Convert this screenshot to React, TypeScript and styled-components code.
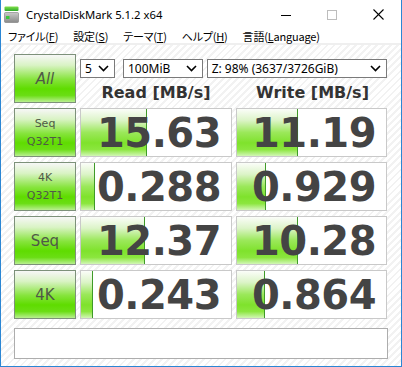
import * as React from 'react';
import styled, { createGlobalStyle } from 'styled-components';

const GlobalStyle = createGlobalStyle`
  html, body {
    margin: 0;
    padding: 0;
    background: #ffffff;
  }
  #root {
    width: 402px;
    height: 367px;
  }
`;

const Window = styled.div`
  width: 402px;
  height: 367px;
  box-sizing: border-box;
  border: 1px solid #2b86d4;
  border-top: none;
  display: flex;
  flex-direction: column;
  background: #ffffff;
  overflow: hidden;
`;

const TitleBar = styled.div`
  height: 29px;
  display: flex;
  align-items: center;
  padding-left: 3px;
  font-family: 'Noto Sans', 'Liberation Sans', sans-serif;
  font-size: 11.3px;
  color: #000;
`;

const TitleText = styled.span`
  margin-left: 7px;
  flex: 1;
`;

const Caption = styled.div`
  width: 46px;
  height: 29px;
  display: flex;
  align-items: center;
  justify-content: center;
`;

const MenuBar = styled.div`
  height: 14px;
  display: flex;
  align-items: center;
  border-bottom: 2px solid #efefef;
  font-family: 'Noto Sans CJK JP', 'Noto Sans', sans-serif;
  font-feature-settings: 'palt';
  font-size: 11px;
  letter-spacing: -0.2px;
  color: #000;
`;

const MenuItem = styled.span`
  padding: 0 8px 0 7px;
  white-space: nowrap;
  u {
    text-decoration: underline;
    text-underline-offset: 1px;
  }
`;

const Content = styled.div`
  flex: 1;
  padding: 9px 13px 0 13px;
  background: repeating-linear-gradient(
    -45deg,
    #ffffff 0px,
    #ffffff 3px,
    #f2f2f2 3px,
    #f2f2f2 5px
  );
`;

const Grid = styled.div`
  display: grid;
  grid-template-columns: 62px 152px 151px;
  grid-template-rows: repeat(5, 49px);
  column-gap: 4px;
  row-gap: 5px;
`;

const LabelButton = styled.div<{ $big?: boolean; $italic?: boolean }>`
  box-sizing: border-box;
  border: 1px solid #7d917a;
  background: linear-gradient(
    to bottom,
    #f7f7f7 0%,
    #d9f3c4 22%,
    #86e43c 52%,
    #5fdc00 72%,
    #6ade14 86%,
    #b9ef90 100%
  );
  display: flex;
  flex-direction: column;
  align-items: center;
  justify-content: center;
  font-family: 'DejaVu Sans', sans-serif;
  font-size: ${(p) => (p.$big ? '15px' : '11px')};
  font-style: ${(p) => (p.$italic ? 'italic' : 'normal')};
  line-height: 18px;
  color: #4f5a47;
`;

const TopCell = styled.div`
  grid-column: 2 / 4;
  display: flex;
  flex-direction: column;
  padding-top: 5px;
`;

const SelectRow = styled.div`
  display: flex;
  height: 19px;
`;

const Select = styled.div<{ $w: number; $gap: number }>`
  width: ${(p) => p.$w}px;
  margin-right: ${(p) => p.$gap}px;
  box-sizing: border-box;
  border: 1px solid #7a7a7a;
  background: #fff;
  display: flex;
  align-items: center;
  justify-content: space-between;
  padding: 0 5px 0 4px;
  font-family: 'Noto Sans', 'Liberation Sans', sans-serif;
  font-size: 12px;
  color: #000;
  white-space: nowrap;
`;

const HeaderRow = styled.div`
  display: grid;
  grid-template-columns: 152px 151px;
  column-gap: 5px;
  margin-top: 5px;
`;

const Header = styled.div`
  text-align: center;
  font-family: 'DejaVu Sans', sans-serif;
  font-weight: bold;
  font-size: 16px;
  color: #333;
  line-height: 20px;
`;

const ValueBox = styled.div`
  position: relative;
  box-sizing: border-box;
  border: 1px solid #c9c9c9;
  background: #fff;
  display: flex;
  align-items: center;
  justify-content: flex-end;
  padding-right: 10px;
  overflow: hidden;
`;

const Bar = styled.div`
  position: absolute;
  left: 0;
  top: 0;
  bottom: 0;
  border-right: 1px solid #3f9a28;
  background: linear-gradient(
    to bottom,
    #fbfdf9 0%,
    #dcf4c8 24%,
    #9be85a 50%,
    #7fe22c 72%,
    #8be63e 86%,
    #d2f6b6 100%
  );
`;

const Value = styled.span`
  position: relative;
  font-family: 'DejaVu Sans', sans-serif;
  font-weight: bold;
  font-size: 40px;
  line-height: 40px;
  color: #444;
  letter-spacing: -0.5px;
`;

const CommentBox = styled.div`
  margin-top: 9px;
  height: 31px;
  box-sizing: border-box;
  border: 1px solid #adadad;
  background: #fff;
`;

const Chevron = () => (
  <svg width="11" height="7" viewBox="0 0 11 7">
    <polyline points="1,1 5.5,5.5 10,1" fill="none" stroke="#000" strokeWidth="1.6" />
  </svg>
);

const AppIcon = () => (
  <svg width="15" height="17" viewBox="0 0 15 17">
    <defs>
      <linearGradient id="drv" x1="0" y1="0" x2="0" y2="1">
        <stop offset="0" stopColor="#c9c9c9" />
        <stop offset="1" stopColor="#8a8a8a" />
      </linearGradient>
      <linearGradient id="grn" x1="0" y1="0" x2="0" y2="1">
        <stop offset="0" stopColor="#7fe04a" />
        <stop offset="1" stopColor="#2ea82a" />
      </linearGradient>
    </defs>
    <rect x="0.5" y="0.5" width="14" height="4.5" rx="1" fill="url(#grn)" />
    <rect x="0.5" y="6.5" width="14" height="10" rx="1" fill="url(#drv)" stroke="#7a7a7a" strokeWidth="0.6" />
    <rect x="2" y="10" width="3.5" height="3" fill="#3cc83c" />
  </svg>
);

const rows = [
  { label: ['Seq', 'Q32T1'], read: '15.63', rw: 65, write: '11.19', ww: 60 },
  { label: ['4K', 'Q32T1'], read: '0.288', rw: 13, write: '0.929', ww: 28 },
  { label: ['Seq'], read: '12.37', rw: 63, write: '10.28', ww: 60 },
  { label: ['4K'], read: '0.243', rw: 11, write: '0.864', ww: 27 },
];

export default function App() {
  return (
    <>
      <GlobalStyle />
      <Window>
        <TitleBar>
          <AppIcon />
          <TitleText>CrystalDiskMark 5.1.2 x64</TitleText>
          <Caption>
            <svg width="10" height="10" viewBox="0 0 10 10">
              <line x1="0" y1="5.5" x2="10" y2="5.5" stroke="#000" strokeWidth="1" />
            </svg>
          </Caption>
          <Caption>
            <svg width="10" height="10" viewBox="0 0 10 10">
              <rect x="0.5" y="0.5" width="9" height="9" fill="none" stroke="#bdbdbd" strokeWidth="1" />
            </svg>
          </Caption>
          <Caption>
            <svg width="11" height="11" viewBox="0 0 11 11">
              <line x1="0.5" y1="0.5" x2="10.5" y2="10.5" stroke="#000" strokeWidth="1.1" />
              <line x1="10.5" y1="0.5" x2="0.5" y2="10.5" stroke="#000" strokeWidth="1.1" />
            </svg>
          </Caption>
        </TitleBar>
        <MenuBar>
          <MenuItem>ファイル(<u>F</u>)</MenuItem>
          <MenuItem>設定(<u>S</u>)</MenuItem>
          <MenuItem>テーマ(<u>T</u>)</MenuItem>
          <MenuItem>ヘルプ(<u>H</u>)</MenuItem>
          <MenuItem>言語(<u>L</u>anguage)</MenuItem>
        </MenuBar>
        <Content>
          <Grid>
            <LabelButton $big $italic>All</LabelButton>
            <TopCell>
              <SelectRow>
                <Select $w={35} $gap={8}>
                  5<Chevron />
                </Select>
                <Select $w={80} $gap={4}>
                  100MiB<Chevron />
                </Select>
                <Select $w={181} $gap={0}>
                  Z: 98% (3637/3726GiB)<Chevron />
                </Select>
              </SelectRow>
              <HeaderRow>
                <Header>Read [MB/s]</Header>
                <Header>Write [MB/s]</Header>
              </HeaderRow>
            </TopCell>
            {rows.map((r) => (
              <React.Fragment key={r.read}>
                <LabelButton $big={r.label.length === 1}>
                  {r.label.map((l) => (
                    <span key={l}>{l}</span>
                  ))}
                </LabelButton>
                <ValueBox>
                  <Bar style={{ width: r.rw }} />
                  <Value>{r.read}</Value>
                </ValueBox>
                <ValueBox>
                  <Bar style={{ width: r.ww }} />
                  <Value>{r.write}</Value>
                </ValueBox>
              </React.Fragment>
            ))}
          </Grid>
          <CommentBox />
        </Content>
      </Window>
    </>
  );
}
